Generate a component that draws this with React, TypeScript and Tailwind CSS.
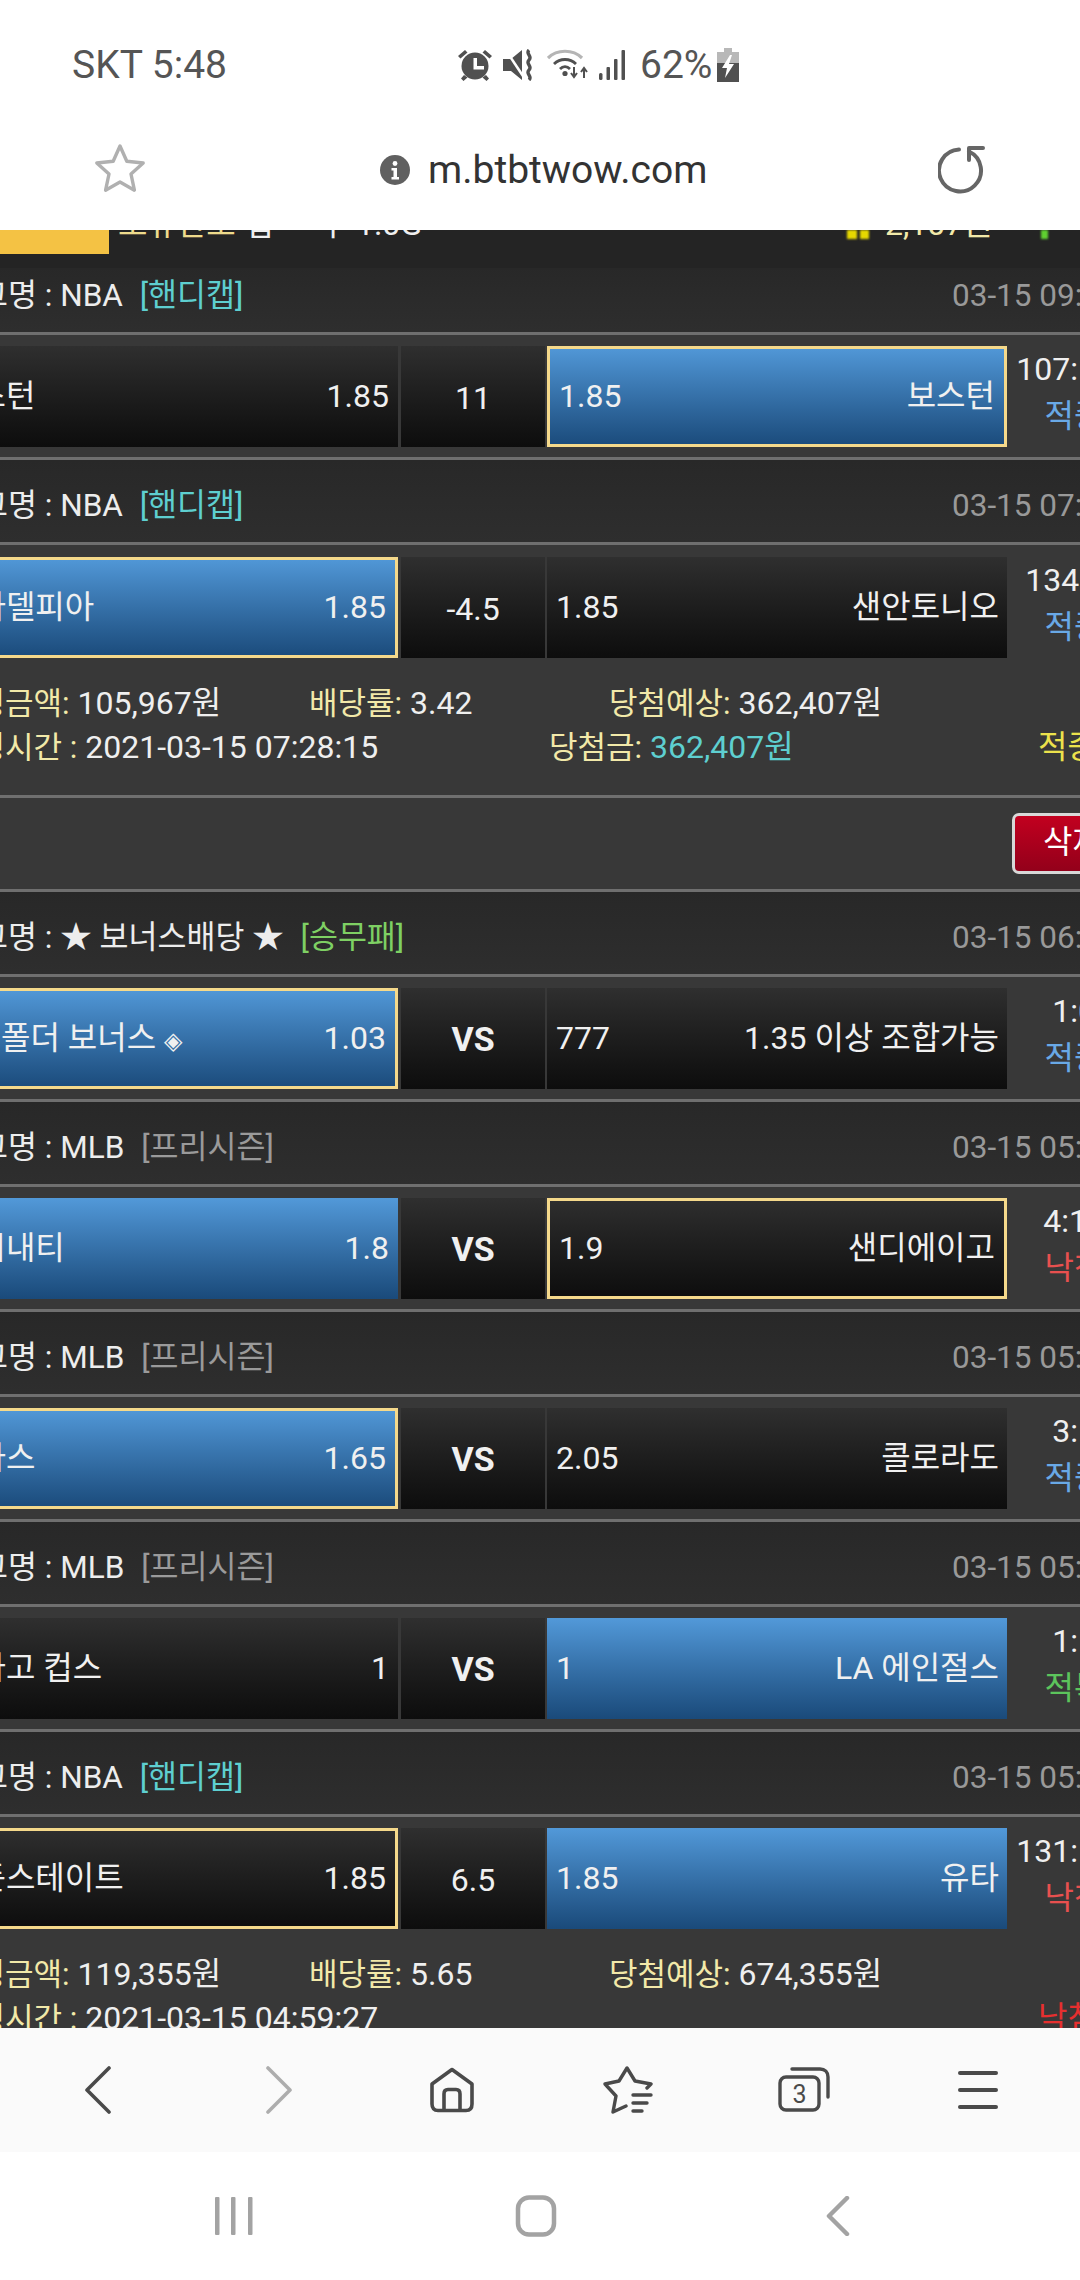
import React from "react";

const ff = { fontFamily: '"Roboto","Noto Sans CJK KR",sans-serif' };

function Btn({ side, team, odds, blue, sel, extra }: { side: "l" | "r"; team: React.ReactNode; odds: string; blue?: boolean; sel?: boolean; extra?: React.ReactNode }) {
  const bg = blue
    ? "bg-gradient-to-b from-[#5299d9] to-[#1a4a7a]"
    : "bg-gradient-to-b from-[#2f2f2f] to-[#0d0d0d]";
  const bd = sel ? "border-[3px] border-[#f5d98b]" : "border-[3px] border-transparent";
  const cls = `h-[101px] flex items-center justify-between text-[32px] text-[#f0f0f0] bg-origin-border pb-[2px] ${bg} ${bd}`;
  return side === "l" ? (
    <div className={`${cls} w-[454px] mr-[1px] pl-0 ${sel ? "pr-[9px]" : "pr-[6px]"}`}>
      <span className="whitespace-nowrap">{team}{extra}</span>
      <span>{odds}</span>
    </div>
  ) : (
    <div className={`${cls} w-[460px] ${sel ? "pl-[9px] pr-[9px]" : "pl-[6px] pr-[5px]"}`}>
      <span>{odds}</span>
      <span className="whitespace-nowrap">{team}</span>
    </div>
  );
}

function Divider() {
  return <div className="h-[3px] bg-[#6f6f6f]" />;
}

function Header({ name, tag, tagColor, date, first }: { name: string; tag: string; tagColor: string; date: string; first?: boolean }) {
  return (
    <div className={`flex items-end justify-between bg-gradient-to-b from-[#282828] to-[#2e2e2e] pb-[16px] pl-[6px] ${first ? "h-[64px]" : "h-[82px]"}`}>
      <div className="text-[31.5px] leading-[40px] text-[#ededed] whitespace-nowrap">
        {name} <span className={`ml-[9px] ${tagColor}`}>{tag}</span>
      </div>
      <div className="text-[31.5px] leading-[40px] text-[#999999] whitespace-nowrap w-[189px]">{date}</div>
    </div>
  );
}

function Row({ left, right, center, score, status, statusColor, vs }: {
  left: { t: React.ReactNode; o: string; blue?: boolean; sel?: boolean; extra?: React.ReactNode };
  right: { t: string; o: string; blue?: boolean; sel?: boolean };
  center: string; score: string; status: string; statusColor: string; vs?: boolean;
}) {
  return (
    <div className="flex gap-[2px] h-[101px]">
      <Btn side="l" team={left.t} odds={left.o} blue={left.blue} sel={left.sel} extra={left.extra} />
      <div className={`w-[144px] flex items-center justify-center bg-gradient-to-b from-[#2f2f2f] to-[#0d0d0d] text-[#f0f0f0] ${vs ? "text-[34px] font-bold" : "text-[32px]"}`}>
        <span className="pt-[2px]">{center}</span>
      </div>
      <Btn side="r" team={right.t} odds={right.o} blue={right.blue} sel={right.sel} />
      <div className="w-[134px] -ml-[2px] flex flex-col items-center text-[32px] whitespace-nowrap">
        <div className="leading-[47px] text-[#efefef]">{score}</div>
        <div className={`leading-[47px] ${statusColor}`}>{status}</div>
      </div>
    </div>
  );
}

function Label({ children }: { children: React.ReactNode }) {
  return <span className="text-[31px] leading-none text-[#f2e9a9]">{children}</span>;
}

function Info({ a, b, c, time, won, wonColor, st, stColor }: { a: string; b: string; c: string; time: string; won?: string; wonColor?: string; st: string; stColor: string }) {
  return (
    <div className="pt-[23px] pb-[26px] text-[32px] text-[#efefef] whitespace-nowrap">
      <div className="flex h-[44px] leading-[44px]">
        <div className="w-[365px] pl-[4px]"><Label>배팅금액:</Label> {a}</div>
        <div className="w-[300px]"><Label>배당률:</Label> {b}</div>
        <div><Label>당첨예상:</Label> {c}</div>
      </div>
      <div className="flex h-[44px] leading-[44px]">
        <div className="w-[605px] pl-[4px]"><Label>배팅시간 :</Label> {time}</div>
        <div className="w-[489px]">{won ? <><Label>당첨금:</Label> <span className={wonColor}>{won}</span></> : null}</div>
        <div className={stColor}>{st}</div>
      </div>
    </div>
  );
}

const blueS = "text-[#69a9e6]";
const redS = "text-[#e8504f]";
const greenS = "text-[#5cc45c]";

function StatusIcons() {
  return (
    <div className="flex items-center ml-[230px] h-[40px] text-[#555555]">
      <svg width="36" height="32" viewBox="0 0 36 32" fill="#505050">
        <circle cx="18" cy="17" r="13.5" />
        <path d="M1 7l7-6 2.500 2.500-7 6zM35 7l-7-6-2.500 2.500 7 6zM7 26l3.500 2.500-4 3.500-2.500-2.500zM29 26l-3.500 2.500 4 3.500 2.500-2.500z" />
        <path d="M16.500 9h3.500v8h7v3.500H16.500z" fill="#fff" />
      </svg>
      <svg className="ml-[10px]" width="31" height="32" viewBox="0 0 31 32" fill="none">
        <path d="M0 10h8L19 1v30L8 22H0z" fill="#505050" />
        <path d="M2 0l18 27" stroke="#fff" strokeWidth="2.600" />
        <path d="M26 1c-4 4 4 6 0 10s4 6 0 10 4 6 0 10" stroke="#505050" strokeWidth="3.400" />
      </svg>
      <svg className="ml-[13px]" width="42" height="32" viewBox="0 0 42 32" fill="none">
        <path d="M1 9c9-9 25-9 34 0" stroke="#b5b5b5" strokeWidth="3.2" />
        <path d="M7 15c6-6 16-6 22 0M13 20c3-3 7-3 10 0" stroke="#505050" strokeWidth="2.8" />
        <circle cx="18" cy="24.5" r="2.6" fill="#505050" />
        <path d="M27 18v9M24 24l3 4 3-4M37 29v-9M34 23l3-4 3 4" stroke="#505050" strokeWidth="2" />
      </svg>
      <svg className="ml-[9px]" width="28" height="32" viewBox="0 0 28 32" fill="#505050">
        <rect x="1" y="24" width="3.5" height="7" rx="1.5" />
        <rect x="8.5" y="18" width="3.5" height="13" rx="1" />
        <rect x="16" y="10" width="3.5" height="21" rx="1" />
        <rect x="23.5" y="1" width="3.5" height="30" rx="1" />
      </svg>
      <span className="ml-[14px] text-[39px] leading-[40px] text-[#555555]">62%</span>
      <svg className="ml-[5px]" width="22" height="34" viewBox="0 0 22 34">
        <path d="M7 0h8v4h7v11H0V4h7z" fill="#b8b8b8" />
        <path d="M0 15h22v19H0z" fill="#505050" />
        <path d="M13 7L5 20h5l-2 10 9-14h-5l3-9z" fill="#fff" />
      </svg>
    </div>
  );
}

export default function App() {
  return (
    <div className="w-[1080px] h-[2280px] flex flex-col overflow-hidden bg-white" style={ff}>
      {/* status + url */}
      <div className="h-[230px] shrink-0 bg-white relative z-10">
        <div className="h-[140px] pt-[45px] pl-[72px] flex items-start">
          <span className="text-[39px] leading-[40px] text-[#555555] whitespace-nowrap w-[155px]">SKT 5:48</span>
          <StatusIcons />
        </div>
        <div className="flex items-center h-[60px] pl-[94px] pr-[94px]">
          <svg width="52" height="50" viewBox="0 0 52 50" fill="none" className="-mt-[4px]">
            <path d="M26 3l6.8 15.2 16.4 1.8-12.2 11 3.4 16.2L26 39l-14.4 8.2L15 31 2.8 20l16.4-1.8z" stroke="#b0b0b0" strokeWidth="3.4" strokeLinejoin="round" />
          </svg>
          <svg className="ml-[234px]" width="30" height="30" viewBox="0 0 30 30">
            <circle cx="15" cy="15" r="15" fill="#606060" />
            <circle cx="15" cy="8.5" r="2.4" fill="#fff" />
            <path d="M11.5 13h5.5v9h2v2.4h-7.5V22h2v-6.6h-2z" fill="#fff" />
          </svg>
          <span className="ml-[18px] text-[39px] leading-[44px] text-[#333333] flex-1">m.btbtwow.com</span>
          <svg width="48" height="48" viewBox="0 0 48 48" fill="none" stroke="#666666" strokeWidth="4" strokeLinecap="round" strokeLinejoin="round">
            <path d="M21 3.5A21 21 0 1 0 31 5.5" />
            <path d="M45 2H31v12" />
          </svg>
        </div>
      </div>

      {/* page */}
      <div className="h-[1798px] shrink-0 overflow-hidden bg-[#383838]">
        <div className="w-[1197px] -ml-[56px]">
          <div className="h-[38px] bg-[#242424] flex items-start relative overflow-hidden">
            <div className="w-[165px] h-[24px] bg-[#f4c244]" />
            <div className="-mt-[24px] ml-[9px] text-[32px] leading-[36px] whitespace-nowrap w-[767px] text-[#efefef]"><span className="text-[#eedb8c]">보유한도</span><span className="ml-[10px]">합</span><span className="ml-[27px]">· 구 1.0G</span></div>
            <div className="-mt-[24px] text-[32px] leading-[36px] text-[#f2e9a9] whitespace-nowrap">2,107원</div>
            <div className="absolute left-[903px] top-0 w-[10px] h-[9px] bg-[#e6d800] blur-[1px]" />
            <div className="absolute left-[916px] top-0 w-[9px] h-[9px] bg-[#e6d800] blur-[1px]" />
            <div className="absolute left-[1097px] top-0 w-[7px] h-[9px] bg-[#5fd030] blur-[1px]" />
          </div>
          <Header first name="리그명 : NBA" tag="[핸디캡]" tagColor="text-[#5ecfd0]" date="03-15 09:30" />
          <Divider />
          <div className="pt-[11px] pb-[10px]">
            <Row left={{ t: "보스턴", o: "1.85" }} right={{ t: "보스턴", o: "1.85", blue: true, sel: true }} center="11" score="107:101" status="적중" statusColor={blueS} />
          </div>
          <Divider />

          <Header name="리그명 : NBA" tag="[핸디캡]" tagColor="text-[#5ecfd0]" date="03-15 07:30" />
          <Divider />
          <div className="pt-[12px]">
            <Row left={{ t: "필라델피아", o: "1.85", blue: true, sel: true }} right={{ t: "샌안토니오", o: "1.85" }} center="-4.5" score="134:99" status="적중" statusColor={blueS} />
            <Info a="105,967원" b="3.42" c="362,407원" time="2021-03-15 07:28:15" won="362,407원" wonColor="text-[#5ecfd0]" st="적중" stColor="text-[#ece24c]" />
          </div>
          <Divider />
          <div className="h-[91px] pt-[15px] pl-[1068px]">
            <div className="w-[129px] h-[61px] rounded-l-[7px] border-[3px] border-r-0 border-[#d8d8d8] bg-gradient-to-b from-[#c2001f] to-[#93001a] text-[32px] text-white pl-[28px] leading-[52px] whitespace-nowrap overflow-hidden">삭제</div>
          </div>
          <Divider />

          <Header name="리그명 : ★ 보너스배당 ★" tag="[승무패]" tagColor="text-[#7ed063]" date="03-15 06:00" />
          <Divider />
          <div className="pt-[11px] pb-[10px]">
            <Row vs left={{ t: <><span className="text-[24px] leading-none mr-[18px]">◈</span>3폴더 보너스</>, o: "1.03", blue: true, sel: true, extra: <span className="text-[24px] leading-none ml-[8px]">◈</span> }} right={{ t: "1.35 이상 조합가능", o: "777" }} center="VS" score="1:0" status="적중" statusColor={blueS} />
          </div>
          <Divider />

          <Header name="리그명 : MLB" tag="[프리시즌]" tagColor="text-[#9a9a9a]" date="03-15 05:05" />
          <Divider />
          <div className="pt-[11px] pb-[10px]">
            <Row vs left={{ t: "신시내티", o: "1.8", blue: true }} right={{ t: "샌디에이고", o: "1.9", sel: true }} center="VS" score="4:10" status="낙첨" statusColor={redS} />
          </div>
          <Divider />

          <Header name="리그명 : MLB" tag="[프리시즌]" tagColor="text-[#9a9a9a]" date="03-15 05:05" />
          <Divider />
          <div className="pt-[11px] pb-[10px]">
            <Row vs left={{ t: "텍사스", o: "1.65", blue: true, sel: true }} right={{ t: "콜로라도", o: "2.05" }} center="VS" score="3:1" status="적중" statusColor={blueS} />
          </div>
          <Divider />

          <Header name="리그명 : MLB" tag="[프리시즌]" tagColor="text-[#9a9a9a]" date="03-15 05:05" />
          <Divider />
          <div className="pt-[11px] pb-[10px]">
            <Row vs left={{ t: "시카고 컵스", o: "1" }} right={{ t: "LA 에인절스", o: "1", blue: true }} center="VS" score="1:1" status="적특" statusColor={greenS} />
          </div>
          <Divider />

          <Header name="리그명 : NBA" tag="[핸디캡]" tagColor="text-[#5ecfd0]" date="03-15 05:00" />
          <Divider />
          <div className="pt-[11px]">
            <Row left={{ t: "골든스테이트", o: "1.85", sel: true }} right={{ t: "유타", o: "1.85", blue: true }} center="6.5" score="131:121" status="낙첨" statusColor={redS} />
            <Info a="119,355원" b="5.65" c="674,355원" time="2021-03-15 04:59:27" st="낙첨" stColor="text-[#e62f2f]" />
          </div>
        </div>
      </div>

      {/* browser toolbar */}
      <div className="h-[124px] shrink-0 bg-[#fafafa] flex items-center pl-[85px] relative z-10">
        <svg width="26" height="48" viewBox="0 0 26 48" fill="none"><path d="M24 2L2 24l22 22" stroke="#4a4a4a" strokeWidth="3.6" strokeLinecap="round" strokeLinejoin="round" /></svg>
        <svg width="26" height="48" viewBox="0 0 26 48" fill="none" className="ml-[155px]"><path d="M2 2l22 22L2 46" stroke="#adadad" strokeWidth="3.6" strokeLinecap="round" strokeLinejoin="round" /></svg>
        <svg width="46" height="46" viewBox="0 0 46 46" fill="none" className="ml-[137px]" stroke="#4a4a4a" strokeWidth="3.6" strokeLinejoin="round">
          <path d="M23 2.5L43 17v20c0 4-2 6.5-6 6.5H9c-4 0-6-2.500-6-6.500V17z" />
          <path d="M15 43V27c0-3 1.500-4.500 4-4.500h8c2.500 0 4 1.500 4 4.500v16" />
        </svg>
        <svg width="50" height="48" viewBox="0 0 50 48" fill="none" className="ml-[128px]" stroke="#4a4a4a" strokeLinecap="round" strokeLinejoin="round">
          <path d="M44 22l4-4-16-3-8-13-8 13-14 3 11 12-3 16 13-6" strokeWidth="3.4" />
          <path d="M30 29h18M30 37h14M30 45h9" strokeWidth="3.4" />
        </svg>
        <svg width="52" height="46" viewBox="0 0 52 46" fill="none" className="ml-[125px]" stroke="#4a4a4a" strokeWidth="3.4" strokeLinecap="round">
          <rect x="2" y="10" width="39" height="33" rx="6" />
          <path d="M14 2h28c5 0 8 3 8 8v20" />
          <text x="21.500" y="36" fontSize="25" textAnchor="middle" fill="#4a4a4a" stroke="none" style={ff}>3</text>
        </svg>
        <div className="ml-[128px] w-[40px] flex flex-col gap-[13px]">
          <div className="h-[4px] bg-[#4a4a4a] rounded-full" />
          <div className="h-[4px] bg-[#4a4a4a] rounded-full" />
          <div className="h-[4px] bg-[#4a4a4a] rounded-full" />
        </div>
      </div>

      {/* android nav */}
      <div className="h-[128px] shrink-0 bg-white flex items-center pl-[215px]">
        <svg width="38" height="40" viewBox="0 0 38 40" fill="#a3a3a3">
          <rect x="0" y="1" width="4.5" height="38" rx="1" />
          <rect x="16" y="1" width="4.5" height="38" rx="1" />
          <rect x="33" y="1" width="4.5" height="38" rx="1" />
        </svg>
        <svg width="42" height="42" viewBox="0 0 42 42" fill="none" className="ml-[262px]">
          <rect x="3" y="2.500" width="36" height="37" rx="11" stroke="#a3a3a3" strokeWidth="4.5" />
        </svg>
        <svg width="24" height="40" viewBox="0 0 24 40" fill="none" className="ml-[269px]">
          <path d="M21 2L3 20l18 18" stroke="#a3a3a3" strokeWidth="4.5" strokeLinecap="round" strokeLinejoin="round" />
        </svg>
      </div>
    </div>
  );
}
